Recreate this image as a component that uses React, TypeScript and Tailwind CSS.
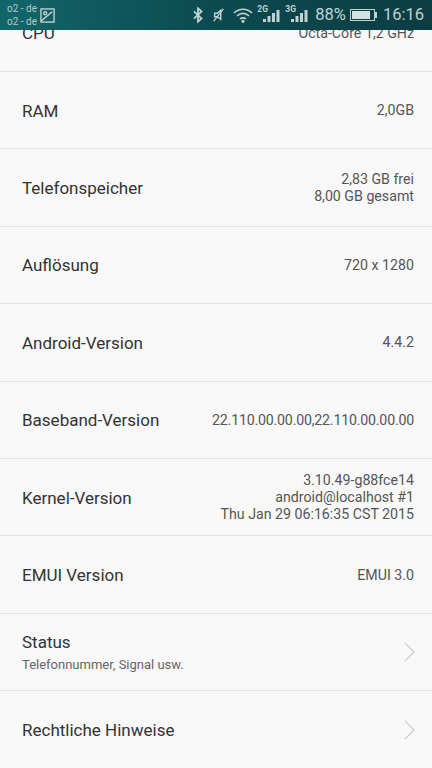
interface InfoRow {
  label: string;
  value?: string[];
  sub?: string;
  link?: boolean;
  tight?: boolean;
}

const rows: InfoRow[] = [
  { label: "CPU", value: ["Octa-Core 1,2 GHz"] },
  { label: "RAM", value: ["2,0GB"] },
  { label: "Telefonspeicher", value: ["2,83 GB frei", "8,00 GB gesamt"] },
  { label: "Auflösung", value: ["720 x 1280"] },
  { label: "Android-Version", value: ["4.4.2"] },
  { label: "Baseband-Version", value: ["22.110.00.00.00,22.110.00.00.00"], tight: true },
  {
    label: "Kernel-Version",
    value: ["3.10.49-g88fce14", "android@localhost #1", "Thu Jan 29 06:16:35 CST 2015"],
  },
  { label: "EMUI Version", value: ["EMUI 3.0"] },
  { label: "Status", sub: "Telefonnummer, Signal usw.", link: true },
  { label: "Rechtliche Hinweise", link: true },
];

function Signal({ tag }: { tag: string }) {
  return (
    <div className="relative w-[23px] h-[20px]">
      <span className="absolute left-0 top-0 text-[8.5px] leading-none font-bold text-[#c0d2d2]">{tag}</span>
      <svg viewBox="0 0 23 20" className="absolute inset-0 w-[23px] h-[20px]" fill="#c0d2d2">
        <rect x="6" y="14" width="3" height="3" />
        <rect x="10.5" y="11" width="3" height="6" />
        <rect x="15" y="8" width="3" height="9" />
        <rect x="19.5" y="5" width="3" height="12" />
      </svg>
    </div>
  );
}

function StatusBar() {
  return (
    <div className="relative z-10 h-[30px] flex items-center justify-between bg-gradient-to-r from-[#12666a] via-[#0c4a50] to-[#0b3d43] text-[#c0d2d2] pl-[7px] pr-[8px]">
      <div className="flex items-center gap-[3px]">
        <div className="text-[10px] leading-[13px] text-[#b5cccc]">
          <div>o2 - de</div>
          <div>o2 - de</div>
        </div>
        <svg viewBox="0 0 16 16" className="w-[15px] h-[15px]" fill="none" stroke="#d5e2e2" strokeWidth="1.3">
          <rect x="1" y="1" width="14" height="14" />
          <circle cx="5.5" cy="5.5" r="1.6" />
          <path d="M1.5 13.5 L13 4" />
        </svg>
      </div>
      <div className="flex items-center">
        <svg viewBox="0 0 12 18" className="w-[12px] h-[16px] mr-[8px]" fill="none" stroke="#c0d2d2" strokeWidth="2">
          <path d="M1.5 5 L10 13 L6 16.5 V1.5 L10 5 L1.5 13" />
        </svg>
        <svg viewBox="0 0 16 16" className="w-[14px] h-[14px] mr-[7px]" fill="none" stroke="#c0d2d2" strokeWidth="1.6">
          <path d="M3 6 H6 L10 2.5 V13 L6 10 H3 Z" />
          <path d="M2 15 L13 1" />
        </svg>
        <svg viewBox="0 0 20 16" className="w-[20px] h-[16px] mr-[4px]" fill="none" stroke="#c0d2d2" strokeWidth="1.6">
          <path d="M1 6 C6 1 14 1 19 6" />
          <path d="M4 9 C7.5 5.5 12.5 5.5 16 9" />
          <path d="M7 12 C8.5 10.5 11.5 10.5 13 12" />
          <circle cx="10" cy="14.3" r="0.8" fill="#c0d2d2" />
        </svg>
        <Signal tag="2G" />
        <div className="w-[5px]" />
        <Signal tag="3G" />
        <span className="ml-[7px] text-[16.5px] text-[#c0d2d2]">88%</span>
        <div className="ml-[4px] w-[25px] h-[12px] border border-[#c0d2d2] p-[1px]">
          <div className="h-full w-[86%] bg-[#d5e2e2]" />
        </div>
        <div className="w-[2px] h-[6px] bg-[#c0d2d2] mr-[6px]" />
        <span className="text-[16.5px] text-[#c0d2d2]">16:16</span>
      </div>
    </div>
  );
}

export default function App() {
  return (
    <div className="w-[432px] h-[768px] overflow-hidden bg-[#f8f8f8] font-['Roboto',sans-serif]">
      <StatusBar />
      <div className="mt-[-35.4px]">
        {rows.map((row) => (
          <div
            key={row.label}
            className="h-[77.4px] pt-[1px] flex items-center justify-between pl-[22px] pr-[18px] border-b border-[#e2e2e2]"
          >
            <div>
              <div className="text-[17px] leading-[20px] text-[#333333]">{row.label}</div>
              {row.sub && <div className="mt-[5px] text-[13px] leading-[16px] text-[#666666]">{row.sub}</div>}
            </div>
            {row.value && (
              <div
                className={
                  row.tight
                    ? "text-right text-[14.2px] leading-[17px] text-[#555555] tracking-[-0.2px]"
                    : "text-right text-[14.2px] leading-[17px] text-[#555555]"
                }
              >
                {row.value.map((line) => (
                  <div key={line}>{line}</div>
                ))}
              </div>
            )}
            {row.link && (
              <svg viewBox="0 0 11 20" className="w-[11px] h-[20px] mr-[-1px]" fill="none" stroke="#cdcdcd" strokeWidth="1.2">
                <path d="M1 1 L10 10 L1 19" />
              </svg>
            )}
          </div>
        ))}
      </div>
    </div>
  );
}
